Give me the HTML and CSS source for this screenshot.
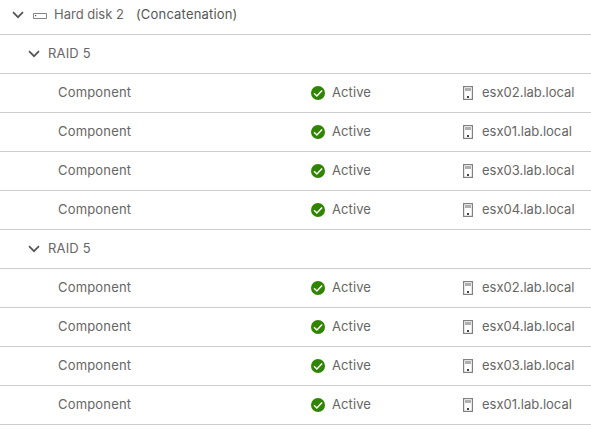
FILE: index.html
```
<!DOCTYPE html>
<html lang="en">
<head>
    <meta charset="UTF-8">
    <meta name="viewport" content="width=device-width, initial-scale=1.0">
    <title>Physical disk placement</title>
    <link rel="stylesheet" href="styles.css">
</head>
<body>
    <!-- Shared icons -->
    <svg class="sprite" aria-hidden="true">
        <symbol id="caret" viewBox="0 0 12 8">
            <path d="M1 1.2L6 6.2L11 1.2" fill="none" stroke="#565656" stroke-width="1.7"/>
        </symbol>
        <symbol id="disk" viewBox="0 0 14 6">
            <path d="M.5 .5H13.5V5.5H.5V1.5Z" fill="none" stroke="#858585"/>
            <path d="M2 2h1.2v1.2H2z" fill="#565656"/>
        </symbol>
        <symbol id="check" viewBox="0 0 14 14">
            <circle cx="7" cy="7" r="7" fill="#2f8400"/>
            <path d="M3 7.2L5.9 10L11.1 4.6" fill="none" stroke="#fff" stroke-width="1.5"/>
        </symbol>
        <symbol id="host" viewBox="0 0 10 14">
            <rect x=".6" y=".6" width="8.8" height="12.8" fill="#fff" stroke="#808080" stroke-width="1.2"/>
            <path d="M2 2h6v3H2z" fill="#b0b0b0"/>
            <path d="M4 10h2v2H4z" fill="#454545"/>
        </symbol>
    </svg>

    <div class="tree">
        <div class="row disk">
            <svg class="caret"><use href="#caret"/></svg>
            <svg class="disk-icon"><use href="#disk"/></svg>
            <span class="disk-name">Hard disk 2</span>
            <span class="disk-type">(Concatenation)</span>
        </div>

        <div class="row raid">
            <svg class="caret"><use href="#caret"/></svg>
            <span class="raid-name">RAID 5</span>
        </div>
        <div class="row component">
            <span class="name">Component</span>
            <span class="state"><svg class="check"><use href="#check"/></svg><span class="state-text">Active</span></span>
            <span class="host"><svg class="host-icon"><use href="#host"/></svg><span class="host-name">esx02.lab.local</span></span>
        </div>
        <div class="row component">
            <span class="name">Component</span>
            <span class="state"><svg class="check"><use href="#check"/></svg><span class="state-text">Active</span></span>
            <span class="host"><svg class="host-icon"><use href="#host"/></svg><span class="host-name">esx01.lab.local</span></span>
        </div>
        <div class="row component">
            <span class="name">Component</span>
            <span class="state"><svg class="check"><use href="#check"/></svg><span class="state-text">Active</span></span>
            <span class="host"><svg class="host-icon"><use href="#host"/></svg><span class="host-name">esx03.lab.local</span></span>
        </div>
        <div class="row component">
            <span class="name">Component</span>
            <span class="state"><svg class="check"><use href="#check"/></svg><span class="state-text">Active</span></span>
            <span class="host"><svg class="host-icon"><use href="#host"/></svg><span class="host-name">esx04.lab.local</span></span>
        </div>

        <div class="row raid">
            <svg class="caret"><use href="#caret"/></svg>
            <span class="raid-name">RAID 5</span>
        </div>
        <div class="row component">
            <span class="name">Component</span>
            <span class="state"><svg class="check"><use href="#check"/></svg><span class="state-text">Active</span></span>
            <span class="host"><svg class="host-icon"><use href="#host"/></svg><span class="host-name">esx02.lab.local</span></span>
        </div>
        <div class="row component">
            <span class="name">Component</span>
            <span class="state"><svg class="check"><use href="#check"/></svg><span class="state-text">Active</span></span>
            <span class="host"><svg class="host-icon"><use href="#host"/></svg><span class="host-name">esx04.lab.local</span></span>
        </div>
        <div class="row component">
            <span class="name">Component</span>
            <span class="state"><svg class="check"><use href="#check"/></svg><span class="state-text">Active</span></span>
            <span class="host"><svg class="host-icon"><use href="#host"/></svg><span class="host-name">esx03.lab.local</span></span>
        </div>
        <div class="row component">
            <span class="name">Component</span>
            <span class="state"><svg class="check"><use href="#check"/></svg><span class="state-text">Active</span></span>
            <span class="host"><svg class="host-icon"><use href="#host"/></svg><span class="host-name">esx01.lab.local</span></span>
        </div>
    </div>
</body>
</html>
```
FILE: styles.css
```
:root {
    --clr-text: #666;
    --clr-border: #ccc;
}

* {
    box-sizing: border-box;
    margin: 0;
    padding: 0;
}

body {
    font-family: Inter, sans-serif;
    font-size: 13px;
    line-height: 18px;
    color: var(--clr-text);
    background-color: #fff;
    overflow: hidden;
}

.sprite {
    display: none;
}

.row {
    display: flex;
    align-items: center;
    height: 39px;
    border-bottom: 1px solid var(--clr-border);
    white-space: nowrap;
}

.row svg {
    flex: none;
}

/* top row has less padding above the label */
.disk {
    height: 35px;
    padding: 0 0 4px 12px;
}

.raid {
    padding-left: 28px;
}

.component {
    display: grid;
    grid-template-columns: 253px 152px 1fr;
    padding-left: 58px;
}

/* labels sit slightly above the icon centre line */
.disk-name,
.disk-type,
.raid-name,
.name,
.state-text,
.host-name {
    padding-bottom: 2px;
}

.name,
.raid-name,
.disk-type {
    letter-spacing: .18px;
}

.caret {
    width: 12px;
    height: 8px;
}

.disk-icon {
    width: 14px;
    height: 6px;
    margin: 2px 7px 0 9px;
}

.disk-type {
    margin-left: 12px;
    color: #565656;
}

.raid-name {
    margin-left: 8px;
}

.state,
.host {
    display: flex;
    align-items: center;
}

.check {
    width: 14px;
    height: 14px;
    margin-right: 7px;
}

.state-text {
    letter-spacing: .1px;
}

.host-icon {
    width: 10px;
    height: 14px;
    margin-right: 9px;
}
```
